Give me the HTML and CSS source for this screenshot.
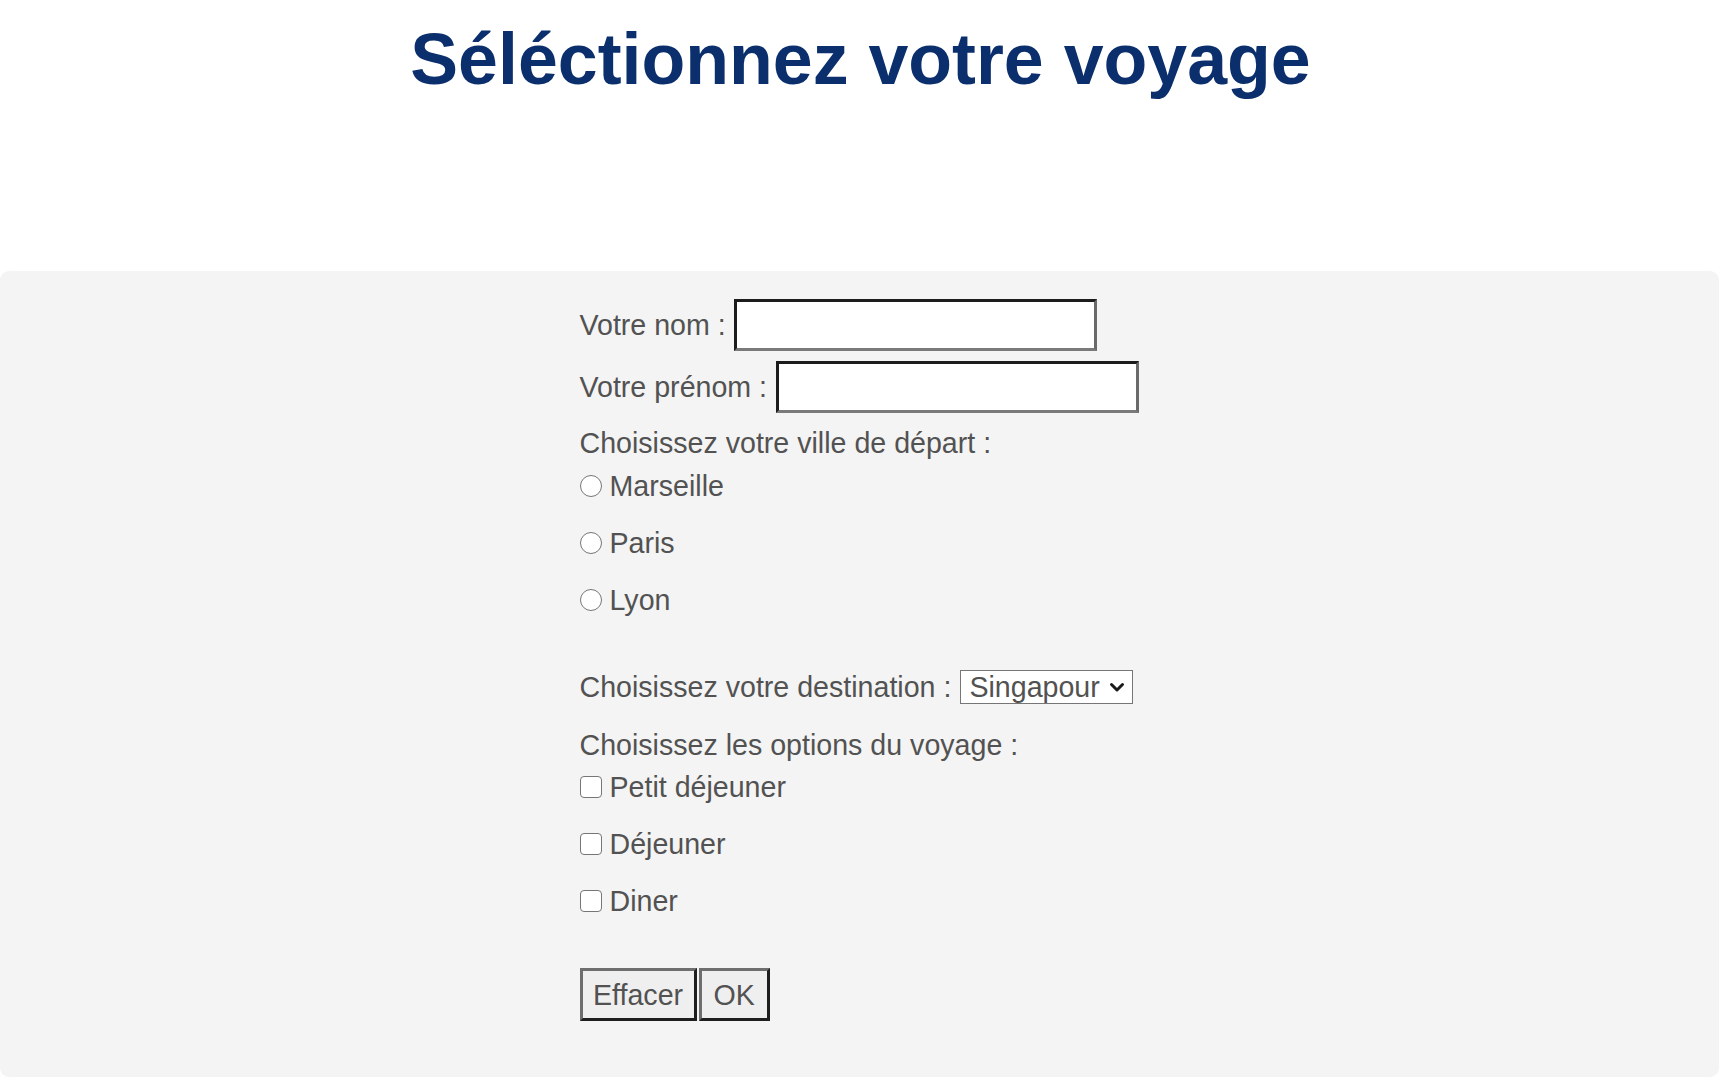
FILE: index.html
```html
<!DOCTYPE html>
<html lang="fr">
<head>
<meta charset="utf-8">
<title>Séléctionnez votre voyage</title>
<link rel="stylesheet" href="styles.css">
</head>
<body>
<h1 class="title">Séléctionnez votre voyage</h1>
<section class="panel">
  <form class="form">
    <div class="row row-first">
      <label for="nom">Votre nom :</label>
      <input class="text-input" type="text" id="nom">
    </div>
    <div class="row row-second">
      <label for="prenom">Votre prénom :</label>
      <input class="text-input" type="text" id="prenom">
    </div>
    <div class="line group-label">Choisissez votre ville de départ :</div>
    <label class="line choice choice-first"><input class="radio" type="radio" name="ville"> Marseille</label>
    <label class="line choice"><input class="radio" type="radio" name="ville"> Paris</label>
    <label class="line choice"><input class="radio" type="radio" name="ville"> Lyon</label>
    <div class="row dest-row">
      <label for="dest">Choisissez votre destination :</label>
      <span class="select-wrap">
        <select id="dest" class="select">
          <option>Singapour</option>
        </select>
        <svg class="chevron" width="16" height="11" viewBox="0 0 16 11"><path d="M2.5 2.5 L8 8 L13.5 2.5" fill="none" stroke="#1a1a1a" stroke-width="3" stroke-linecap="round" stroke-linejoin="round"/></svg>
      </span>
    </div>
    <div class="line group-label options-label">Choisissez les options du voyage :</div>
    <label class="line choice choice-first"><input class="checkbox" type="checkbox"> Petit déjeuner</label>
    <label class="line choice"><input class="checkbox" type="checkbox"> Déjeuner</label>
    <label class="line choice"><input class="checkbox" type="checkbox"> Diner</label>
    <div class="buttons">
      <button type="reset" class="btn btn-reset">Effacer</button>
      <button type="submit" class="btn btn-ok">OK</button>
    </div>
  </form>
</section>
</body>
</html>
```

FILE: styles.css
```css
html, body {
  margin: 0;
  padding: 0;
  background: #ffffff;
}

body {
  font-family: "Liberation Sans", Arial, sans-serif;
  color: #525252;
}

.title {
  margin: 19px 0 0 0;
  text-align: center;
  font-size: 71.7px;
  font-weight: bold;
  line-height: 80px;
  color: #0b2e6c;
}

.panel {
  margin: 172px 2px 0 0;
  background: #f4f4f4;
  border-radius: 9px;
  padding: 28px 0 56px 0;
}

.form {
  width: 560px;
  margin: 0 auto;
  display: flex;
  flex-direction: column;
  align-items: flex-start;
  font-size: 28.6px;
  line-height: 32px;
}

.row {
  display: flex;
  align-items: center;
  gap: 8px;
  width: max-content;
  white-space: nowrap;
}

.row > label {
  flex: none;
  white-space: nowrap;
}

.row-second {
  margin-top: 10px;
  gap: 9px;
}

.text-input {
  flex: none;
  box-sizing: border-box;
  width: 363px;
  height: 52px;
  margin: 0;
  padding: 0 6px;
  background: #ffffff;
  border-style: solid;
  border-width: 3px;
  border-color: #1c1c1c #6a6a6a #7a7a7a #1c1c1c;
  font: 28px "Liberation Sans", Arial, sans-serif;
  outline: none;
}

.line {
  display: flex;
  align-items: center;
  height: 32px;
  white-space: nowrap;
}

.group-label {
  margin-top: 14px;
}

.choice {
  margin-top: 25px;
}

.choice-first {
  margin-top: 11px;
}

.radio,
.checkbox {
  appearance: none;
  -webkit-appearance: none;
  box-sizing: border-box;
  width: 22px;
  height: 22px;
  margin: 0 8px 0 0;
  background: #ffffff;
  border: 1.5px solid #767676;
  flex: none;
}

.radio {
  border-radius: 50%;
}

.checkbox {
  border-radius: 4px;
}

.dest-row {
  margin-top: 54px;
  gap: 9px;
}

.select-wrap {
  position: relative;
  display: inline-block;
  flex: none;
}

.select {
  appearance: none;
  -webkit-appearance: none;
  box-sizing: border-box;
  width: 173px;
  height: 34px;
  margin: 0;
  padding: 0 30px 0 8px;
  border: 1px solid #767676;
  border-radius: 0;
  background: #ffffff;
  color: #525252;
  font: 28.6px/32px "Liberation Sans", Arial, sans-serif;
  outline: none;
}

.chevron {
  position: absolute;
  right: 8px;
  top: 12px;
  pointer-events: none;
}

.options-label {
  margin-top: 25px;
}

.options-label + .choice-first {
  margin-top: 10px;
}

.buttons {
  display: flex;
  gap: 2px;
  margin-top: 51px;
}

.btn {
  box-sizing: border-box;
  height: 53px;
  margin: 0;
  padding: 0 10.5px;
  background: #efefef;
  color: #525252;
  border-style: solid;
  border-width: 3px;
  border-color: #6e6e6e #1e1e1e #1e1e1e #6e6e6e;
  font: 28.6px/32px "Liberation Sans", Arial, sans-serif;
}

.btn-ok {
  padding: 0 12px;
}
```
